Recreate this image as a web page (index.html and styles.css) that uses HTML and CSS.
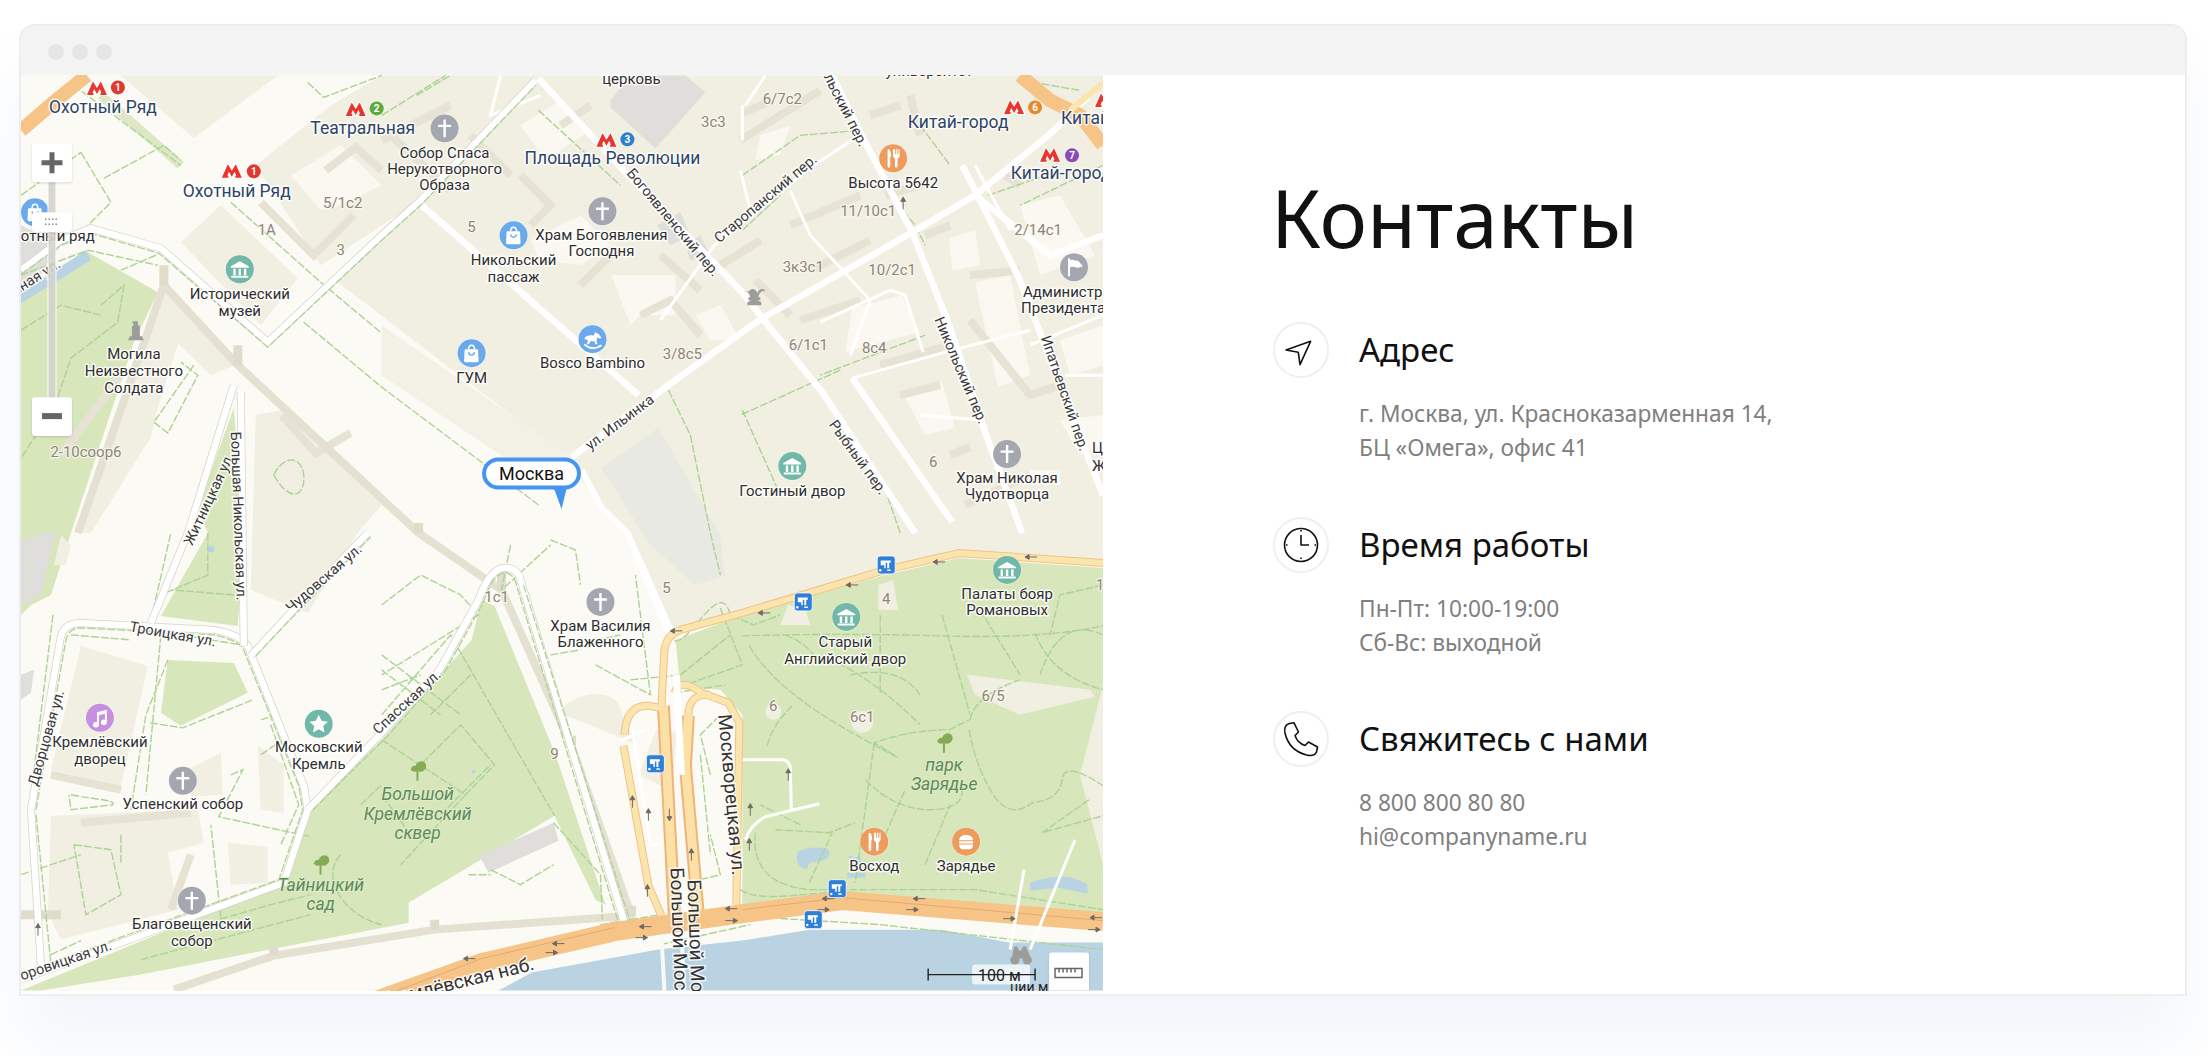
FILE: index.html
```html
<!DOCTYPE html>
<html lang="ru">
<head>
<meta charset="utf-8">
<title>Контакты</title>
<link rel="stylesheet" href="styles.css">
</head>
<body>
<div class="window">
  <div class="titlebar"><span class="dot"></span><span class="dot"></span><span class="dot"></span></div>
  <div class="content">
    <svg class="map" viewBox="0 0 1083 916" xmlns="http://www.w3.org/2000/svg" aria-label="Карта">
      <defs>
        <path id="arL" class="arr" d="M-6 0H6M-6 0l4-2.4v4.8z"/>
        <path id="arR" class="arr" d="M6 0H-6M6 0l-4-2.4v4.8z"/>
        <path id="arU" class="arr" d="M0 -6V6M0 -6l-2.4 4h4.8z"/>
        <path id="arD" class="arr" d="M0 6V-6M0 6l-2.4-4h4.8z"/>
        <g id="i-museum"><circle cx="14" cy="14" r="14.5" class="pin-ring"/><circle cx="14" cy="14" r="14" class="c-teal"/><path class="w" d="M14 6l9 5v1.4H5V11zM7.500 13.500h2.400v6.500H7.500zM12.800 13.500h2.400v6.500h-2.400zM18.100 13.500h2.400v6.500h-2.400zM5.500 20.500h17v2h-17z"/></g>
        <g id="i-church"><circle cx="14" cy="14" r="14.500" class="pin-ring"/><circle cx="14" cy="14" r="14" class="c-grey"/><path class="w" d="M12.800 5h2.400v18h-2.400zM7.500 10.300h13v2.400h-13z"/></g>
        <g id="i-bag"><circle cx="14" cy="14" r="14.500" class="pin-ring"/><circle cx="14" cy="14" r="14" class="c-blue"/><path class="w" d="M8.500 10h11a1 1 0 0 1 1 1l.5 10.500a1.500 1.500 0 0 1-1.500 1.500h-11.500a1.500 1.500 0 0 1-1.500-1.500l.5-10.500a1 1 0 0 1 1-1z"/><path class="bag-h" d="M11 10.500c0-6 6-6 6 0"/><path class="bag-s" d="M11 13c.5 4 5.500 4 6 0"/></g>
        <g id="i-horse"><circle cx="14" cy="14" r="14.500" class="pin-ring"/><circle cx="14" cy="14" r="14" class="c-blue"/><path class="w" d="M6 13c2-3 6-3.500 9-2.500l2-4 1 1.500 2 .5 3 4-1.500 1-2.500-1.500-1 4 1 3h-2l-1-3h-4l-1.500 3h-2l1-4-3-1z"/><path class="horse-r" d="M6 19c4 5 12 5 17 1"/></g>
        <g id="i-food"><circle cx="14" cy="14" r="14.500" class="pin-ring"/><circle cx="14" cy="14" r="14" class="c-orange"/><path class="w" d="M9.500 5c2 1 2.500 4 2.500 7l-1 1v9a1.300 1.300 0 0 1-2.600 0V5.500zM15 5h1v5h1V5h1.200v5h1V5h1.200v6.500c0 1.500-1.200 2.500-2 2.700V22a1.300 1.300 0 0 1-2.600 0v-7.800c-.8-.2-2-1.200-2-2.700V5z"/></g>
        <g id="i-burger"><circle cx="14" cy="14" r="14.500" class="pin-ring"/><circle cx="14" cy="14" r="14" class="c-orange"/><path class="w" d="M7 12.500c0-7 14-7 14 0zM7 13.500h14v2.200H7zM7 16.700h14c0 3.500-2 4.800-4 4.800h-6c-2 0-4-1.300-4-4.800z"/></g>
        <g id="i-star"><circle cx="14" cy="14" r="14.500" class="pin-ring"/><circle cx="14" cy="14" r="14" class="c-teal"/><path class="w" d="M14 5l2.800 6 6.400.8-4.700 4.400 1.300 6.500-5.800-3.300-5.800 3.300 1.300-6.500-4.700-4.400 6.400-.8z"/></g>
        <g id="i-music"><circle cx="14" cy="14" r="14.500" class="pin-ring"/><circle cx="14" cy="14" r="14" class="c-purple"/><path class="w" d="M11 8.500l10-2.500v12.500a3 2.700 0 1 1-2-2.500V10l-6 1.500v9.500a3 2.700 0 1 1-2-2.500z"/></g>
        <g id="i-flag"><circle cx="14" cy="14" r="14.500" class="pin-ring"/><circle cx="14" cy="14" r="14" class="c-grey"/><path class="w" d="M8 5h2v18H8zM10 7c3-1.500 5 1 8 .5l5 5.500c-3 1-5 2-8 1-2-.500-3.500-.5-5 0z"/></g>
        <g id="i-metro"><path class="metro" d="M-1 13.500L5 0 9 6.500 13 0l6 13.500h-6.500v-2h1L11.800 7.500 9 12.500 6.200 7.500 4.500 11.500h1v2z"/></g>
        <g id="i-bus"><rect x="-9" y="-9" width="18" height="18" rx="3" class="bus"/><path class="w" d="M-5.500 -4.500h10v2.200h-1.500v5.500h-2v-5.500h-1.500v5.500h-1.500v-3h-3.500zM-6 4a1.300 1.300 0 1 0 .01 0zM1 4.500h3.500v1.500H1z"/></g>
        <g id="i-tree"><path class="tree-t" d="M0 -4a6 6 0 0 1 8 -4a5 5 0 0 1 1 8a5 5 0 0 1 -7 1a5 5 0 0 1 -7 -1a5 5 0 0 1 5 -4z"/><rect x="0.800" y="-1" width="2" height="12" class="tree-s"/></g>
      </defs>

      <!-- ground -->
      <rect class="ground" width="1083" height="916"/>

      <!-- parks and water -->
      <path class="park" d="M0 220L67 177 137 217 113 267 50 458 30 520 10 530 0 540z"/>
      <path class="park" d="M177 433L213 333 223 458 217 551 140 541 187 458z"/>
      <path class="park" d="M147 585L213 588 227 618 160 651 140 638z"/>
      <path class="park" d="M461 525L474 531 535 680 585 830 575 825 534 741 388 828 388 848 233 878 120 900 20 916 0 916 263 808 287 735 361 665 451 565z"/>
      <path class="park" d="M655 565L722 540 865 500 939 483 1083 493V840L822 822 722 832V640L700 615 660 612z"/>
      <path class="park-s" d="M80 20L160 90"/>
      <path class="bldg-grey" d="M0 150L40 170 20 200 0 215z"/>
      <path class="water" d="M0 217L65 175 70 185 0 228z"/>
      <path class="water" d="M478 916L511 898 638 875 722 866 789 855 922 855 989 868 1083 868V916z"/>
      <path class="water" d="M777 777c6-3 20-6 30-3 5 3 2 10-5 12-10 2-15 0-15 8-8 2-12-8-10-17zM828 780c4 3 10 4 12 0l1 9-10 1zM827 798h18v5h-18zM1010 808c10-4 30-8 42-5l15 6 1 10-30-6-28 3z"/>
      <circle class="water" cx="190" cy="474" r="3.500"/>
      <circle class="water" cx="453" cy="697" r="2"/>

      <!-- city blocks -->
      <path class="block" d="M317 207L394 125 518 0H1083V488L939 478 865 495 722 538 648 558 607 458 581 433 541 378z"/>
      <path class="block" d="M235 90L310 30 361 0H518L400 125 300 190z"/>
      <path class="block" d="M100 0L173 63 257 0z"/>
      <path class="block" d="M160 167L200 130 277 203 240 250z"/>
      <path class="block" d="M60 458L143 215 213 290 190 300 157 268 135 340 130 362 70 458z"/>
      <path class="block" d="M235 340L262 335 361 430 337 458 287 538 230 515z"/>
      <path class="block" d="M60 571L127 591 100 711 30 695z"/>
      <path class="block" d="M30 741L177 735 183 768 147 778 157 835 40 865 27 838z"/>
      <path class="block" d="M207 768L247 772 247 808 210 810zM237 671L263 690 263 738 240 735zM163 697L200 678 202 720 170 722zM33 490L40 460 50 470 45 490z"/>
      <path class="block-s" d="M538 640c8-20 50-30 60-10 8 15 5 25 18 30l-4 8-60-25zM618 700l18-45 20 2-4 60z"/>
      <circle class="block" cx="753" cy="637" r="8"/>
      <circle class="block" cx="842" cy="647" r="11"/>
      <path class="block" d="M947 600L1070 615 1075 622 1000 640 955 620zM1083 610L1060 700 1083 790zM858 510L873 505 878 535 858 535zM785 535L768 530 760 550 790 550z"/>
      <path class="grave" d="M361 300L540 420 551 382 361 250z"/>

      <!-- courtyards -->
      <path class="yard" d="M929 163L955 155 960 190 932 195zM955 207L990 200 1010 300 978 312zM882 317L922 307 935 353 905 360zM832 233L882 220 899 257 825 277zM591 200L655 200 655 240 620 240 610 250zM1000 130L1040 120 1075 180 1020 200zM1040 265L1083 250V290L1050 300zM1040 345L1083 340V370L1060 380zM1010 395H1040V410H1010zM510 165L560 140 590 170 560 190 520 185zM740 60L770 50 760 80 735 85zM500 50L540 25 570 55 525 85zM675 240L700 230 720 265 690 265zM270 100L320 70 361 110 320 130 300 135z"/>
      <path class="bldg-grey" d="M590 25L610 0H665L685 17 635 73 590 32z"/>
      <path class="bldg-grey2" d="M581 393L638 353 700 460 704 501 675 510 630 470z"/>
      <path class="bldg-grey" d="M459 781L533 748 538 766 468 798z"/>
      <path class="bldg-grey" d="M0 600L13 595 10 618 0 625zM637 150L660 137 670 160 650 170zM665 170L680 160 690 180 670 185z"/>
      <path class="bldg-grey" d="M0 465L35 455 20 520 0 530z"/>

      <!-- building wings -->
      <g class="wing">
        <path d="M305 95L335 72 361 95M240 127L293 180 333 140M361 65L430 30M370 60L430 115M450 60L490 100M500 100L530 130 510 150M540 50L570 30"/>
        <path d="M720 65L800 15M722 38L745 28M850 40L880 30M890 20L900 60M1000 110L985 100M865 120L905 108"/>
        <path d="M770 150L840 120M735 205L770 240M790 195L850 165M780 245L840 225M860 290L930 270"/>
        <path d="M905 160L930 150M950 200L1000 195M950 245L1010 320 1040 310M880 320L920 310M930 380L950 372M945 430L1010 400"/>
        <path d="M620 240L650 225 680 260M640 180L680 215M560 210L590 180M700 190L740 165"/>
        <path d="M261 340L295 378 330 358M40 380L100 300"/>
        <path d="M30 700L100 715M60 748L170 738M170 780L150 835"/>
      </g>

      <!-- kremlin wall -->
      <path class="wall" d="M57 458L143 210 217 290 398 458 481 515 551 671 611 841 414 855 253 881 153 915"/>
      <path class="wall-t" d="M143 210v-20M217 290v-20M481 515v-20M398 458v-10M551 671v-10M611 841v-10M414 855v-10M253 881v-10M40 840H0"/>

      <!-- pedestrian paths -->
      <g class="ped">
        <path d="M83 103L143 70 160 85M53 10L160 90M60 77L90 127 60 157M0 120L60 77M287 7L303 22 361 0"/>
        <path d="M283 247L361 312 518 430M0 200L67 175 137 190M80 230L103 210 97 247 50 283 33 333 0 383"/>
        <path d="M173 290L133 347 147 358 177 300 160 287M135 180L100 195M0 255L40 230 80 240"/>
        <path d="M210 127L300 207 361 258M253 400C270 430 285 420 283 400S262 380 253 400"/>
        <path d="M361 40L425 0M361 160L400 125 515 5M396 20L430 0M518 35L600 110M648 315L670 360 690 458 700 500M722 335L760 420M880 458L860 400M905 260L800 300M820 295L720 340"/>
        <path d="M722 100L780 60 840 55M722 155L760 120M870 120L895 150 905 170M900 50L930 90M1002 5L1060 15M1083 90L1000 130M968 120L1040 95"/>
        <path d="M160 560L220 570M32 540L10 720M15 740L30 890M50 560L110 565M140 560L125 720M147 585L125 640 110 735"/>
        <path d="M130 545L150 458M187 458V500L140 520M213 520L150 515"/>
        <path d="M129 648L162 653 232 625M250 650L278 730 260 770M210 700L222 695 198 742 290 762M240 645L255 640 262 665 240 680M50 720C75 725 95 725 92 730L50 735 48 720M53 770L90 775 100 820 65 840 53 770M200 843L190 750"/>
        <path d="M100 760V790M0 800L60 780M30 880L60 866M180 850L250 830 290 820M120 885L290 840"/>
        <path d="M361 530L400 500 440 520 458 540 361 600M361 640L430 560 470 630 534 741M361 665L445 720 474 690 440 650 400 690M361 595L420 640M445 720L380 790M390 760L361 720M320 780C300 800 320 840 361 850M340 730L361 710"/>
        <path d="M361 580L440 640M361 615L400 600M420 740L470 690M410 640L450 600"/>
        <path d="M533 748L580 800 582 845M470 795L500 810 533 790M448 800L470 800M555 570L600 560M530 465L555 475 560 510M575 590L630 620 615 500M610 605L660 600M490 470L481 515 530 470M530 580L560 575M580 850L640 840"/>
        <path d="M654 566C670 570 700 500 710 540L733 550 760 540M654 618L705 610M660 600L710 560M700 533L722 590 665 610"/>
        <path d="M729 571Q755 615 832 658T854 668Q890 655 929 655L949 645M747 671Q752 650 772 631M722 561Q820 558 922 561T1083 551M854 668L835 808M845 705Q875 735 909 735T942 715M949 655Q955 690 972 718T1012 728Q1040 725 1042 705T1083 711M1015 558Q1030 600 1083 615M735 758Q730 810 790 815L955 815 1083 835M1069 725L1022 758 1083 741M755 755L809 758 835 748M789 808L812 758"/>
        <path d="M860 540V620M922 540L950 640M800 580Q850 600 900 650M830 600Q880 590 900 620M765 560Q790 570 800 590M950 645Q955 620 1000 605M960 535L1000 600M1083 560Q1040 540 1020 600M1083 510L1040 520 1030 560M865 760L885 715M905 790L930 730"/>
        <path d="M720 815C740 830 800 815 830 818M830 830L1080 838M780 750L740 730"/>
        <path d="M730 842L860 850 1083 875M640 870L730 850"/>
        <path d="M680 680L690 780M690 700L680 660 700 640M680 805L700 800 690 760"/>
      </g>

      <!-- ordinary streets -->
      <g class="rd">
        <path d="M401 130L618 320"/>
        <path d="M518 3L601 93 722 217 742 243 802 317 895 458"/>
        <path d="M551 382L648 310 722 257 742 243 892 157 955 120 1032 57 1072 17"/>
        <path d="M812 0L845 67 892 157 929 250 965 357 1002 458"/>
        <path d="M942 90L959 123 999 203 1075 400 1083 420"/>
        <path d="M832 303L932 447"/>
        <path d="M561 395L581 433 607 458 648 558"/>
        <path d="M955 120L1030 180 1083 160"/>
      </g>
      <g class="rd-thin">
        <path d="M640 245L694 170 789 93 839 60"/>
        <path d="M800 247L870 215 885 220 903 277M832 303L925 277M925 277L1010 255"/>
        <path d="M722 65L722 30M745 0L725 30M770 115L790 160M790 160L850 225M850 225L830 280M960 345L900 340M1010 270L1083 240M1045 300L1083 300"/>
        <path d="M955 90L990 155M720 95L730 135"/>
        <path d="M480 0L470 40 520 20"/>
        <path d="M722 685H762Q768 685 770 692L771 735M725 765Q730 750 745 742L799 729"/>
        <path d="M600 666L625 655M612 655L630 770 640 770"/>
      </g>
      <g>
        <path class="walk-o" d="M0 195L40 165 70 153 140 173 247 267 361 160 400 125 515 5"/>
        <path class="walk-i" d="M0 195L40 165 70 153 140 173 247 267 361 160 400 125 515 5"/>
        <path class="walk-d" d="M0 199L40 170 70 158 138 178 247 272 361 165 400 130 515 10"/>
      </g>
      <g>
        <path class="walk-o" d="M10 735L40 561Q44 548 60 548L193 555Q220 560 227 571L283 711 287 735 263 808 0 905"/>
        <path class="walk-i" d="M10 735L40 561Q44 548 60 548L193 555Q220 560 227 571L283 711 287 735 263 808 0 905"/>
        <path class="walk-d" d="M15 735L45 565Q48 553 60 553L193 560Q216 565 222 573L278 711 282 735 258 805 0 899"/>
        <path class="walk-o" d="M10 735L20 891"/><path class="walk-i" d="M10 735L20 891"/>
        <path class="walk-o" d="M220 317L223 571"/><path class="walk-i" d="M220 317L223 571"/>
        <path class="walk-o" d="M213 310L167 458 130 548"/><path class="walk-i" d="M213 310L167 458 130 548"/>
        <path class="walk-o" d="M230 581L267 541 347 458"/><path class="walk-i" d="M230 581L267 541 347 458"/>
        <path class="walk-d" d="M235 581L270 544 350 462"/>
        <path class="walk-o" d="M287 735L361 658 419 595 458 525Q470 490 488 493 498 495 500 505L604 848"/>
        <path class="walk-i" d="M287 735L361 658 419 595 458 525Q470 490 488 493 498 495 500 505L604 848"/>
        <path class="walk-d" d="M292 735L366 662 424 597 463 527Q473 496 486 498 493 500 495 507L598 848"/>
        <path class="walk-d" d="M503 510L610 848"/>
      </g>

      <!-- main roads -->
      <path class="rd" d="M607 458L650 555"/>
      <path class="yl-o" d="M1083 488L939 478 865 495 722 538 660 555Q646 560 644 575L641 632"/>
      <path class="yl-o" d="M604 660Q606 630 628 631L640 633M603 671L628 811 641 841"/>
      <path class="yl-o" d="M654 618Q660 602 681 618M681 618L708 628 719 648 716 830M668 641Q668 618 690 620"/>
      <path class="yl-o2" d="M643 631L654 841"/>
      <path class="yl-o2" d="M668 641L665 691 678 841"/>
      <path class="yl" d="M1083 488L939 478 865 495 722 538 660 555Q646 560 644 575L641 632"/>
      <path class="yl" d="M604 660Q606 630 628 631L640 633M603 671L628 811 641 841"/>
      <path class="yl" d="M654 618Q660 602 681 618M681 618L708 628 719 648 716 830M668 641Q668 618 690 620"/>
      <path class="yl2" d="M643 631L654 841"/>
      <path class="yl2" d="M668 641L665 691 678 841"/>
      <path class="rd-w" d="M656 600L661 700"/>
      <path class="mg" d="M330 935L461 888 594 857 722 839 822 826 1083 847"/>
      <path class="mg-l" d="M340 930L461 884 594 853M722 835L822 823 1083 846"/>
      <path class="mg-o" d="M66 0L35 25 0 55"/>
      <path class="mg-o" d="M1000 0L1030 25 1060 40 1083 70"/>
      <path class="yl" d="M1083 8L1050 35"/>
      <path class="bridge" d="M641 860L644 916M661 860L664 916"/>
      <path class="rd-thin" d="M1004 795L990 875M1055 765L1010 875"/>

      <!-- arrows -->
      <g>
        <use href="#arL" x="744" y="538"/><use href="#arL" x="832" y="510"/><use href="#arL" x="919" y="487"/><use href="#arL" x="1011" y="482"/>
        <use href="#arL" x="656" y="556"/><use href="#arL" x="538" y="869"/><use href="#arL" x="449" y="884"/><use href="#arL" x="625" y="852"/>
        <use href="#arR" x="531" y="878"/><use href="#arR" x="621" y="863"/><use href="#arL" x="711" y="834"/><use href="#arR" x="711" y="846"/>
        <use href="#arL" x="808" y="824"/><use href="#arR" x="803" y="835"/><use href="#arL" x="899" y="824"/><use href="#arR" x="892" y="835"/>
        <use href="#arR" x="989" y="844"/><use href="#arL" x="1076" y="843"/><use href="#arR" x="1074" y="855"/>
        <use href="#arU" x="612" y="727"/><use href="#arU" x="627" y="816"/><use href="#arD" x="649" y="740"/><use href="#arU" x="671" y="780"/>
        <use href="#arU" x="768" y="700"/><use href="#arU" x="730" y="735"/><use href="#arU" x="628" y="740"/><use href="#arU" x="729" y="770"/><use href="#arU" x="17" y="855"/>
        <use href="#arU" x="883" y="128"/>
      </g>

      <!-- street names -->
      <text class="st" text-anchor="middle" transform="translate(653 147) rotate(50)" y="5">Богоявленский пер.</text>
      <text class="st" text-anchor="middle" transform="translate(745 123) rotate(-40)" y="5">Старопанский пер.</text>
      <text class="st" text-anchor="middle" transform="translate(941 295) rotate(67)" y="5">Никольский пер.</text>
      <text class="st" text-anchor="end" transform="translate(844 70) rotate(63)" y="5">Никольский пер.</text>
      <text class="st" text-anchor="middle" transform="translate(1045 318) rotate(71)" y="5">Ипатьевский пер.</text>
      <text class="st" text-anchor="middle" transform="translate(838 382) rotate(54)" y="5">Рыбный пер.</text>
      <text class="st" text-anchor="middle" transform="translate(599 347) rotate(-37)" y="5">ул. Ильинка</text>
      <text class="st" text-anchor="middle" transform="translate(188 424) rotate(-65)" y="5">Житницкая ул.</text>
      <text class="st" text-anchor="middle" transform="translate(218 441) rotate(88)" y="5">Большая Никольская ул.</text>
      <text class="st" text-anchor="middle" transform="translate(303 503) rotate(-41)" y="5">Чудовская ул.</text>
      <text class="st" text-anchor="middle" transform="translate(152 559) rotate(10)" y="5">Троицкая ул.</text>
      <text class="st" text-anchor="middle" transform="translate(386 627) rotate(-43)" y="5">Спасская ул.</text>
      <text class="st" text-anchor="middle" transform="translate(25 663) rotate(-74)" y="5">Дворцовая ул.</text>
      <text class="st" text-anchor="end" transform="translate(90 870) rotate(-19)" y="5">Боровицкая ул.</text>
      <text class="st" text-anchor="end" transform="translate(38 187) rotate(-32)" y="5">Манежная ул.</text>
      <text class="st-lg" text-anchor="end" transform="translate(513 888) rotate(-14)" y="7">Кремлёвская наб.</text>
      <text class="st-lg" transform="translate(650 793) rotate(88)">Большой Москворецкий мост</text>
      <text class="st-lg" transform="translate(667 805) rotate(88)">Большой Москворецкий мост</text>
      <text class="st-lg" text-anchor="middle" transform="translate(711 720) rotate(85)" y="6">Москворецкая ул.</text>

      <!-- house numbers -->
      <g class="num">
        <text x="322" y="133">5/1с2</text><text x="246" y="160">1А</text><text x="320" y="180">3</text>
        <text x="451" y="157">5</text><text x="693" y="52">3с3</text><text x="662" y="284">3/8с5</text>
        <text x="762" y="29">6/7с2</text><text x="848" y="141">11/10с1</text><text x="1018" y="160">2/14с1</text>
        <text x="783" y="197">3к3с1</text><text x="872" y="200">10/2с1</text><text x="788" y="275">6/1с1</text>
        <text x="854" y="278">8с4</text><text x="913" y="392">6</text><text x="65" y="382">2-10соор6</text>
        <text x="476" y="527">1с1</text><text x="534" y="684">9</text><text x="646" y="518">5</text>
        <text x="866" y="529">4</text><text x="753" y="636">6</text><text x="842" y="647">6с1</text><text x="973" y="626">6/5</text><text x="1080" y="515">1</text>
      </g>

      <!-- fountain, monument, binoculars -->
      <path class="gly" d="M730 217c2-4 7-2 8 2 1-4 6-6 8-2-2-1-6 0-7 6h2v3h-3l4 2v3h-14v-3l4-2h-3v-3h2c-1-6-5-7-7-6z" transform="translate(-1 -1)"/>
      <path class="gly" d="M111 246h6v4l2 1v10h2l2 4h-16l2-4h2v-10l2-1z"/>
      <path class="gly" d="M994 872l3 0 2 4h2l2-4h3l4 10a4.500 4.500 0 1 1-7 2h-4a4.500 4.500 0 1 1-7-2z"/>

      <!-- poi pins -->
      <use href="#i-church" x="410" y="39"/><use href="#i-church" x="568" y="122"/><use href="#i-bag" x="479" y="146"/>
      <use href="#i-bag" x="437" y="264"/><use href="#i-horse" x="558" y="250"/><use href="#i-museum" x="205" y="180"/>
      <use href="#i-bag" x="0" y="123"/><use href="#i-food" x="859" y="69"/><use href="#i-flag" x="1040" y="178"/>
      <use href="#i-museum" x="758" y="377"/><use href="#i-church" x="973" y="365"/><use href="#i-music" x="65" y="629"/>
      <use href="#i-church" x="148" y="692"/><use href="#i-star" x="284" y="635"/><use href="#i-church" x="157" y="812"/>
      <use href="#i-church" x="566" y="513"/><use href="#i-museum" x="812" y="528"/><use href="#i-museum" x="973" y="481"/>
      <use href="#i-food" x="840" y="753"/><use href="#i-burger" x="932" y="753"/>
      <use href="#i-tree" x="395" y="695"/><use href="#i-tree" x="298" y="789"/><use href="#i-tree" x="922" y="667"/>
      <use href="#i-bus" x="866" y="490"/><use href="#i-bus" x="783" y="527"/><use href="#i-bus" x="817" y="814"/><use href="#i-bus" x="793" y="845"/><use href="#i-bus" x="635" y="689"/>

      <!-- poi names -->
      <g class="lb">
        <text x="424" y="83">Собор Спаса</text><text x="424" y="99">Нерукотворного</text><text x="424" y="115">Образа</text>
        <text x="581" y="165">Храм Богоявления</text><text x="581" y="181">Господня</text>
        <text x="493" y="190">Никольский</text><text x="493" y="207">пассаж</text>
        <text x="451" y="308">ГУМ</text><text x="572" y="293">Bosco Bambino</text>
        <text x="219" y="224">Исторический</text><text x="219" y="241">музей</text>
        <text x="113" y="284">Могила</text><text x="113" y="301">Неизвестного</text><text x="113" y="318">Солдата</text>
        <text x="873" y="113">Высота 5642</text>
        <text x="772" y="421">Гостиный двор</text>
        <text x="987" y="408">Храм Николая</text><text x="987" y="424">Чудотворца</text>
        <text x="79" y="672">Кремлёвский</text><text x="79" y="689">дворец</text>
        <text x="162" y="734">Успенский собор</text>
        <text x="298" y="677">Московский</text><text x="298" y="694">Кремль</text>
        <text x="171" y="854">Благовещенский</text><text x="171" y="871">собор</text>
        <text x="580" y="556">Храм Василия</text><text x="580" y="572">Блаженного</text>
        <text x="825" y="572">Старый</text><text x="825" y="589">Английский двор</text>
        <text x="987" y="524">Палаты бояр</text><text x="987" y="540">Романовых</text>
        <text x="854" y="796">Восход</text><text x="946" y="796">Зарядье</text>
        <text x="611" y="9">церковь</text><text x="909" y="1">университет</text>
        <text x="28" y="166" text-anchor="middle">Охотный ряд</text>
        <text x="1003" y="222" class="start">Администрация</text><text x="1001" y="238" class="start">Президента</text>
        <text x="1072" y="378" class="start">Ц</text><text x="1072" y="396" class="start">Ж</text>
      </g>
      <g class="pk">
        <text x="397" y="725">Большой</text><text x="397" y="745">Кремлёвский</text><text x="397" y="764">сквер</text>
        <text x="300" y="816">Тайницкий</text><text x="300" y="835">сад</text>
        <text x="924" y="696">парк</text><text x="924" y="715">Зарядье</text>
      </g>

      <!-- metro -->
      <use href="#i-metro" x="67" y="6"/><circle class="n-red" cx="97" cy="12" r="7"/><text class="ntx" x="97" y="15.500">1</text>
      <use href="#i-metro" x="326" y="27"/><circle class="n-green" cx="356" cy="33" r="7"/><text class="ntx" x="356" y="36.500">2</text>
      <use href="#i-metro" x="202" y="89"/><circle class="n-red" cx="233" cy="96" r="7"/><text class="ntx" x="233" y="99.500">1</text>
      <use href="#i-metro" x="577" y="58"/><circle class="n-blue" cx="607" cy="64" r="7"/><text class="ntx" x="607" y="67.500">3</text>
      <use href="#i-metro" x="985" y="25"/><circle class="n-orange" cx="1015" cy="32" r="7"/><text class="ntx" x="1015" y="35.500">6</text>
      <use href="#i-metro" x="1021" y="73"/><circle class="n-purple" cx="1052" cy="80" r="7"/><text class="ntx" x="1052" y="83.500">7</text>
      <use href="#i-metro" x="1076" y="18"/>
      <g class="mt">
        <text x="82" y="38">Охотный Ряд</text><text x="342" y="59">Театральная</text><text x="216" y="122">Охотный Ряд</text>
        <text x="592" y="89">Площадь Революции</text><text x="938" y="53">Китай-город</text>
        <text x="1041" y="104" text-anchor="middle">Китай-город</text><text x="1041" y="49" class="start">Китай-город</text>
      </g>

      <!-- balloon -->
      <path class="balloon-tail" d="M547 410L541 434 533 412z"/>
      <rect class="balloon" x="463.500" y="384.500" width="95" height="28" rx="14"/>
      <text class="balloon-t" x="511" y="405">Москва</text>

      <!-- controls -->
      <rect class="track" x="27" y="100" width="8" height="225"/>
      <rect class="ctl" x="11" y="68" width="40" height="39" rx="3"/>
      <path class="ctl-g" d="M28.500 77h5v8h8v5h-8v8h-5v-8h-8v-5h8z"/>
      <rect class="ctl" x="11" y="137" width="40" height="20" rx="3"/>
      <path class="ctl-d" d="M24 144h14M24 149h14"/>
      <rect class="ctl" x="11" y="322" width="40" height="39" rx="3"/>
      <rect class="ctl-g" x="21" y="338" width="20" height="6"/>
      <rect class="scale-box" x="952" y="890" width="58" height="20" rx="3"/>
      <path class="scale" d="M908 900H1015M908 894v12M1015 894v12"/>
      <text class="scale-t" x="958" y="906">100 м</text>
      <text class="scale-s" x="990" y="917">ции м</text>
      <path class="ctl" d="M1029 881a3 3 0 0 1 3-3h34a3 3 0 0 1 3 3v35h-40z"/>
      <path class="ruler" d="M1035 894h27v9h-27zM1039 894v4M1043 894v4M1047 894v4M1051 894v4M1055 894v4"/>
    </svg>

    <section class="info">
      <h1 class="heading">Контакты</h1>
      <article class="item">
        <div class="item-head">
          <span class="round"><svg class="ico" viewBox="0 0 56 56"><path d="M37.600 19.300L13 28 25.300 30.300 27 42.700z"/></svg></span>
          <h2 class="item-title">Адрес</h2>
        </div>
        <p class="item-text">г. Москва, ул. Красноказарменная 14,<br>БЦ «Омега», офис 41</p>
      </article>
      <article class="item">
        <div class="item-head">
          <span class="round"><svg class="ico" viewBox="0 0 56 56"><circle cx="28" cy="28" r="16.500"/><path d="M28 18V28H36M28 13v1.500M28 42v-1.500M13 28h1.500M43 28h-1.500"/></svg></span>
          <h2 class="item-title">Время работы</h2>
        </div>
        <p class="item-text">Пн-Пт: 10:00-19:00<br>Сб-Вс: выходной</p>
      </article>
      <article class="item">
        <div class="item-head">
          <span class="round"><svg class="ico" viewBox="0 0 56 56"><path d="M16.500 12.500L21 11.800 25.500 21 22 24.500C23.500 29 27.500 33 32 34.500L35.500 31 44.500 36 43.500 41C42 44.500 38 45 33.500 44 22 41 14.500 33 12 22 11 17 12.500 13.500 16.500 12.500Z"/></svg></span>
          <h2 class="item-title">Свяжитесь с нами</h2>
        </div>
        <p class="item-text">8 800 800 80 80<br>hi@companyname.ru</p>
      </article>
    </section>
  </div>
</div>
</body>
</html>
```

FILE: styles.css
```css
html, body { margin: 0; padding: 0; background: #fff; }
body { height: 1056px; overflow: hidden; font-family: "Noto Sans", "Open Sans", sans-serif; }

.window {
  box-sizing: border-box;
  width: 2168px;
  height: 972px;
  margin: 24px 0 0 19px;
  background: #fff;
  border: 2px solid #ededed;
  border-bottom-color: #f0f0f0;
  border-radius: 16px 16px 0 0;
  box-shadow: 0 50px 70px rgba(90, 130, 190, .08);
}
.titlebar {
  height: 49px;
  box-sizing: border-box;
  padding: 18px 0 0 27px;
  display: flex;
  gap: 8px;
  background: #f4f4f4;
  border-radius: 14px 14px 0 0;
}
.dot { width: 16px; height: 16px; border-radius: 50%; background: #e6e6e6; }

.content { display: flex; }
.map { display: block; width: 1082px; height: 916px; flex: none; background: #fcfaf4; }

/* map surfaces */
.ground { fill: #fcfaf4; }
.park { fill: #d8e6bc; }
.park-s { fill: none; stroke: #dfe8c6; stroke-width: 9; }
.water { fill: #b9d3e3; }
.block { fill: #f1eee2; }
.block-s { fill: #f1eee2; }
.grave { fill: #f3f0e6; }
.yard { fill: #faf8f0; }
.bldg-grey { fill: #dfdeda; }
.bldg-grey2 { fill: #e9e9e3; }
.wing path { fill: none; stroke: #e7e3d4; stroke-width: 8; }
.wall { fill: none; stroke: #e4e1d2; stroke-width: 8; stroke-linejoin: round; }
.wall-t { fill: none; stroke: #dfdccc; stroke-width: 9; }
.ped path { fill: none; stroke: #abd394; stroke-width: 1.4; stroke-dasharray: 8 2; }
.rd path, path.rd { fill: none; stroke: #fff; stroke-width: 6.5; }
.rd-thin path, path.rd-thin { fill: none; stroke: #fff; stroke-width: 3; }
.rd-w { fill: none; stroke: #fff; stroke-width: 7; }
.walk-o { fill: none; stroke: #d6d4c8; stroke-width: 8; }
.walk-i { fill: none; stroke: #fff; stroke-width: 6.5; }
.walk-d { fill: none; stroke: #abd394; stroke-width: 1.3; stroke-dasharray: 8 2; }
.yl-o { fill: none; stroke: #f2c284; stroke-width: 8; }
.yl { fill: none; stroke: #fbe5ae; stroke-width: 6; }
.yl-o2 { fill: none; stroke: #efb479; stroke-width: 13; }
.yl2 { fill: none; stroke: #fbe1a5; stroke-width: 9; }
.mg { fill: none; stroke: #f6c487; stroke-width: 19; }
.mg-l { fill: none; stroke: #e3a972; stroke-width: 1; }
.mg-o { fill: none; stroke: #f6c487; stroke-width: 14; }
.bridge { fill: none; stroke: #f9f9f5; stroke-width: 4; }
.arr { fill: #6f6a64; stroke: #6f6a64; stroke-width: 1; }

/* map glyphs */
.pin-ring { fill: #fff; fill-opacity: .5; }
.c-teal { fill: #71b8a8; }
.c-grey { fill: #a4a7af; }
.c-blue { fill: #69a9ec; }
.c-orange { fill: #ee9c5e; }
.c-purple { fill: #c68fdf; }
.w { fill: #fff; }
.bag-h { fill: none; stroke: #fff; stroke-width: 1.5; }
.bag-s { fill: none; stroke: #69a9ec; stroke-width: 1.3; }
.horse-r { fill: none; stroke: #fff; stroke-width: 2; }
.metro { fill: #e8352e; stroke: #fff; stroke-width: 2; paint-order: stroke; stroke-linejoin: round; }
.bus { fill: #2f7fd8; stroke: #fff; stroke-width: .8; }
.tree-t { fill: #84ab55; }
.tree-s { fill: #84ab55; }
.gly { fill: #9c9c98; }
.n-red { fill: #e0392f; } .n-green { fill: #5faa40; } .n-blue { fill: #2f7fd0; }
.n-orange { fill: #e6892f; } .n-purple { fill: #8a4bb5; }
.ntx { fill: #fff; font: 700 10px Roboto, sans-serif; text-anchor: middle; }

/* map text */
.lb text, .mt text, .num text, .pk text { text-anchor: middle; paint-order: stroke; stroke-linejoin: round; }
.lb text.start, .mt text.start { text-anchor: start; }
.lb text { font: 400 15px Roboto, sans-serif; fill: #2f2f2f; stroke: #fff; stroke-width: 3px; stroke-opacity: .85; }
.mt text { font: 400 17.5px Roboto, sans-serif; fill: #2e4466; stroke: #fff; stroke-width: 3px; stroke-opacity: .85; }
.num text { font: 400 15px Roboto, sans-serif; fill: #8d8578; stroke: #fbf9f2; stroke-width: 2.5px; stroke-opacity: .8; }
.pk text { font: italic 400 17.5px Roboto, sans-serif; fill: #5d8a5b; stroke: #dfecc8; stroke-width: 2px; }
.st { font: 400 14.5px Roboto, sans-serif; fill: #3a3a3a; stroke: #fff; stroke-width: 3px; paint-order: stroke; stroke-opacity: .8; }
.st-lg { font: 400 19px Roboto, sans-serif; fill: #333; stroke: #fff; stroke-width: 3px; paint-order: stroke; stroke-opacity: .8; }
.balloon { fill: #fff; stroke: #4694f2; stroke-width: 4; }
.balloon-tail { fill: #4694f2; }
.balloon-t { font: 400 18px Roboto, sans-serif; fill: #111; text-anchor: middle; }

/* map controls */
.track { fill: #d4d3cc; stroke: #fff; stroke-width: 1; opacity: .9; }
.ctl { fill: #fff; filter: drop-shadow(0 1px 1px rgba(0, 0, 0, .15)); }
.ctl-g { fill: #666; }
.ctl-d { fill: none; stroke: #888; stroke-width: 1.5; stroke-dasharray: 1.5 2; }
.scale { fill: none; stroke: #222; stroke-width: 1.4; }
.scale-box { fill: #fff; fill-opacity: .75; }
.scale-t { font: 400 16px Roboto, sans-serif; fill: #222; }
.scale-s { font: 400 14px Roboto, sans-serif; fill: #222; }
.ruler { fill: none; stroke: #666; stroke-width: 1.5; }

/* contact panel */
.info { padding: 0 0 0 170px; }
.heading {
  margin: 92px 0 55px -2px;
  font-size: 80px;
  font-weight: 400;
  line-height: 100px;
  color: #111;
}
.item { margin: 0 0 51.500px; }
.item-head { display: flex; align-items: center; gap: 30px; }
.round {
  box-sizing: border-box;
  flex: none;
  width: 56px;
  height: 56px;
  border: 2px solid #efefef;
  border-radius: 50%;
  display: block;
  position: relative;
}
.ico { position: absolute; left: -2px; top: -2px; width: 56px; height: 56px; fill: none; stroke: #111; stroke-width: 1.6; stroke-linejoin: round; }
.item-title { margin: 0; font-size: 33px; font-weight: 400; line-height: 56px; color: #111; }
.item-text {
  margin: 19px 0 0 86px;
  font-size: 22.7px;
  line-height: 34px;
  color: #808080;
}
```
